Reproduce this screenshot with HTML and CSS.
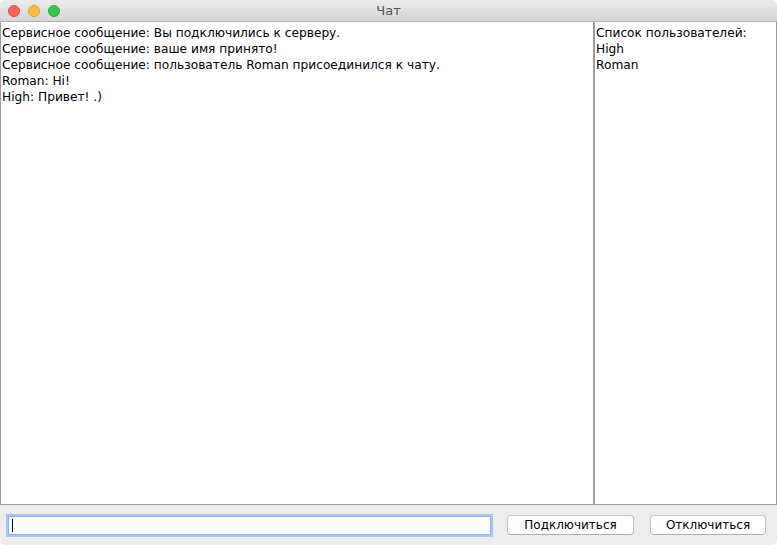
FILE: index.html
```html
<!DOCTYPE html>
<html lang="ru">
<head>
<meta charset="utf-8">
<title>Чат</title>
<link rel="stylesheet" href="styles.css">
</head>
<body>
<div class="window">
  <div class="titlebar">
    <div class="lights">
      <span class="light red"></span>
      <span class="light yellow"></span>
      <span class="light green"></span>
    </div>
    <div class="title">Чат</div>
  </div>
  <div class="main">
    <div class="chat">
      <div>Сервисное сообщение: Вы подключились к серверу.</div>
      <div>Сервисное сообщение: ваше имя принято!</div>
      <div>Сервисное сообщение: пользователь Roman присоединился к чату.</div>
      <div>Roman: Hi!</div>
      <div>High: Привет! .)</div>
    </div>
    <div class="users">
      <div>Список пользователей:</div>
      <div>High</div>
      <div>Roman</div>
    </div>
  </div>
  <div class="bottom">
    <div class="input"><span class="caret"></span></div>
    <button class="btn">Подключиться</button>
    <button class="btn">Отключиться</button>
  </div>
</div>
</body>
</html>
```

FILE: styles.css
```css
html, body {
  margin: 0;
  padding: 0;
  background: #ffffff;
}
.window {
  width: 777px;
  height: 545px;
  display: flex;
  flex-direction: column;
  background: #ececec;
  border-radius: 5px;
  overflow: hidden;
  font-family: "DejaVu Sans", "Noto Sans", sans-serif;
  font-size: 12.2px;
  color: #000;
}
.titlebar {
  height: 22px;
  flex: none;
  position: relative;
  background: linear-gradient(#ebebeb, #d5d5d5);
  border-bottom: 1px solid #b1b1b1;
  box-sizing: border-box;
  display: flex;
  align-items: center;
  justify-content: center;
}
.lights {
  position: absolute;
  left: 8px;
  top: 5px;
  display: flex;
  gap: 8px;
}
.light {
  width: 12px;
  height: 12px;
  border-radius: 50%;
  box-sizing: border-box;
}
.red { background: #fc605c; border: 1px solid #de4a45; }
.yellow { background: #fdbc40; border: 1px solid #dea035; }
.green { background: #34c84a; border: 1px solid #27a93a; }
.title {
  font-family: "DejaVu Sans", sans-serif;
  font-size: 13px;
  color: #555;
}
.main {
  flex: none;
  height: 483px;
  display: flex;
  background: #fff;
}
.chat {
  width: 593px;
  flex: none;
  box-sizing: border-box;
  border-left: 1px solid #9c9c9c;
  border-bottom: 1px solid #9c9c9c;
  padding: 3px 1px 2px;
  line-height: 16px;
}
.users {
  flex: 1;
  box-sizing: border-box;
  border-left: 2px solid #9c9c9c;
  border-right: 1px solid #9c9c9c;
  border-bottom: 1px solid #9c9c9c;
  padding: 3px 1px 2px;
  line-height: 16px;
}
.bottom {
  flex: 1;
  display: flex;
  align-items: center;
  padding: 0 11px 0 8px;
}
.input {
  width: 481px;
  height: 17px;
  background: #fff;
  border: 1px solid #8fb4ee;
  box-shadow: 0 0 0 2px #a7c6f5;
  margin-right: 16px;
  position: relative;
}
.caret {
  position: absolute;
  left: 3px;
  top: 2px;
  width: 1px;
  height: 13px;
  background: #000;
}
.btn {
  height: 20px;
  background: #fff;
  border: 1px solid #c3c3c3;
  border-bottom-color: #aeaeae;
  border-radius: 4px;
  font-family: "DejaVu Sans", sans-serif;
  font-size: 12px;
  color: #000;
  padding: 0;
}
.btn:first-of-type {
  width: 127px;
  margin-right: 16px;
}
.btn:last-of-type {
  width: 116px;
}
```
